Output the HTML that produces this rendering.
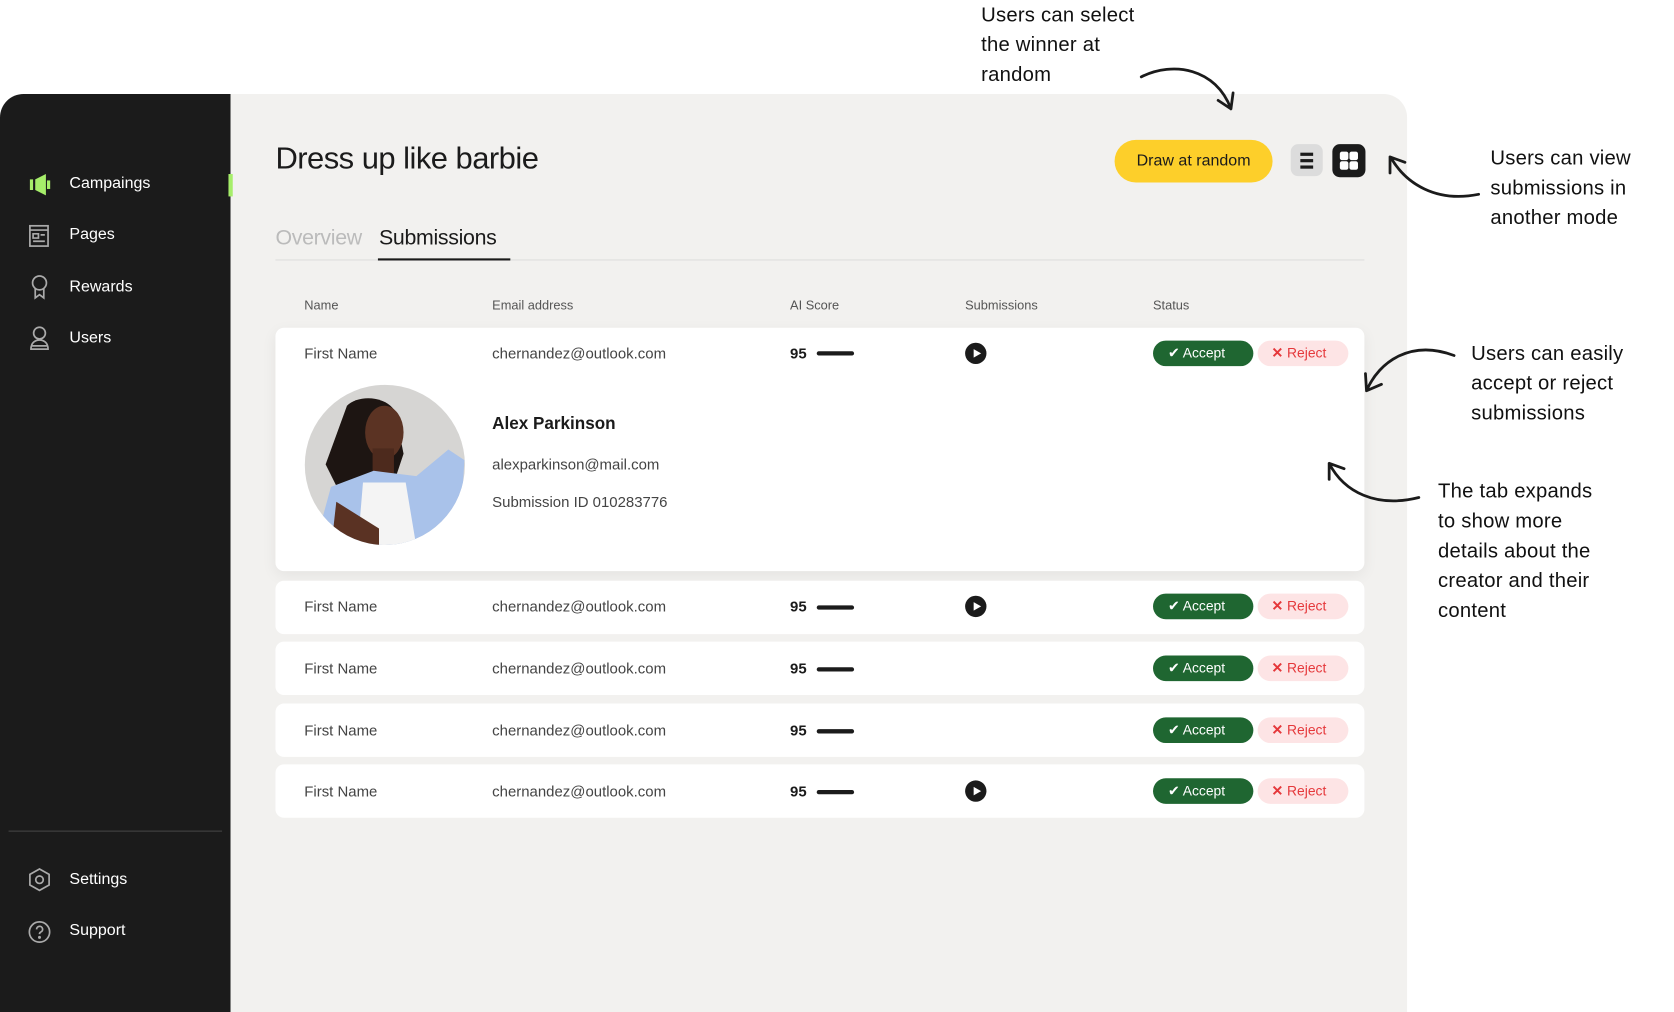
<!DOCTYPE html>
<html><head><meta charset="utf-8">
<style>
html,body{margin:0;padding:0;background:#fff;width:1674px;height:1008px;overflow:hidden;font-family:"Liberation Sans",sans-serif}
#w{position:absolute;left:0;top:0;width:1568px;height:944px;transform:scale(1.0676);transform-origin:0 0}
.a{position:absolute}
.sb{left:0;top:88px;width:216px;height:860px;background:#1b1b1b;border-top-left-radius:22px}
.mn{left:216px;top:88px;width:1102px;height:860px;background:#f2f1ef;border-top-right-radius:22px}
.nav{color:#fff;font-size:15px;left:65px}
.ann{font-size:19px;line-height:28px;color:#111;letter-spacing:.2px}
.hd{font-size:12px;color:#555;top:279px}
.row{left:258px;width:1020px;height:50px;background:#fff;border-radius:8px}
.t{font-size:14px;color:#444;position:absolute}
.acc{position:absolute;left:822px;width:94px;height:24px;border-radius:12px;background:#1f6631;color:#fff;font-size:13px;line-height:24px}
.rej{position:absolute;left:920px;width:85px;height:24px;border-radius:12px;background:#fde4e5;color:#e5383b;font-size:13px;line-height:24px}
.play{position:absolute;left:646px;width:20px;height:20px;border-radius:50%;background:#1b1b1b}
.play:after{content:"";position:absolute;left:8px;top:5.5px;border-left:7px solid #fff;border-top:4.5px solid transparent;border-bottom:4.5px solid transparent}
.bar{position:absolute;left:507px;width:35px;height:4px;border-radius:2px;background:#1b1b1b}
</style></head><body><div id="w">
<div class="a sb"></div>
<div class="a mn"></div>
<div class="a" style="left:214px;top:163px;width:4px;height:21px;background:#a6ee6a"></div>
<svg class="a" style="left:24px;top:160px" width="26" height="26" viewBox="0 0 26 26"><path d="M4 8h3v10H4z M9 8l10-5v20L9 18z" fill="#a6ee6a"/><rect x="20" y="9" width="3" height="8" fill="#a6ee6a"/></svg>
<svg class="a" style="left:26px;top:210px" width="22" height="22" viewBox="0 0 22 22" fill="none" stroke="#aaa" stroke-width="1.6"><rect x="2" y="1.5" width="17" height="19"/><path d="M2 5.5h17M5 9h5v4H5zM12 10h4M5 16h11"/></svg>
<svg class="a" style="left:26px;top:257px" width="22" height="24" viewBox="0 0 22 24" fill="none" stroke="#aaa" stroke-width="1.6"><circle cx="11" cy="8" r="6.5"/><path d="M7 13v9l4-3 4 3v-9"/></svg>
<svg class="a" style="left:26px;top:305px" width="22" height="24" viewBox="0 0 22 24" fill="none" stroke="#aaa" stroke-width="1.6"><circle cx="11" cy="7" r="5.5"/><path d="M3 22c0-6 4-8.5 8-8.5s8 2.5 8 8.5zM3 19h16"/></svg>
<div class="a nav" style="top:163px">Campaings</div>
<div class="a nav" style="top:211px">Pages</div>
<div class="a nav" style="top:260px">Rewards</div>
<div class="a nav" style="top:308px">Users</div>
<div class="a" style="left:8px;top:778px;width:200px;height:1px;background:#444"></div>
<svg class="a" style="left:25px;top:812px" width="24" height="24" viewBox="0 0 24 24" fill="none" stroke="#aaa" stroke-width="1.6"><path d="M12 2l9 5v10l-9 5-9-5V7z"/><circle cx="12" cy="12" r="3.5"/></svg>
<svg class="a" style="left:25px;top:861px" width="24" height="24" viewBox="0 0 24 24" fill="none" stroke="#aaa" stroke-width="1.6"><circle cx="12" cy="12" r="9.5"/><path d="M9.3 9.5a2.8 2.8 0 1 1 3.8 2.6c-.8.4-1.1 1-1.1 1.9"/><circle cx="12" cy="17" r=".6" fill="#aaa"/></svg>
<div class="a nav" style="top:815px">Settings</div>
<div class="a nav" style="top:863px">Support</div>

<div class="a" style="left:258px;top:133px;font-size:29px;color:#1b1b1b;letter-spacing:-.5px">Dress up like barbie</div>
<div class="a" style="left:258px;top:212px;font-size:20px;color:#bbb;letter-spacing:-.3px">Overview</div>
<div class="a" style="left:355px;top:212px;font-size:20px;color:#1b1b1b;letter-spacing:-.3px">Submissions</div>
<div class="a" style="left:258px;top:243px;width:1020px;height:1px;background:#ddd"></div>
<div class="a" style="left:354px;top:242px;width:124px;height:2px;background:#1b1b1b"></div>

<div class="a" style="left:1044px;top:131px;width:148px;height:40px;border-radius:20px;background:#fdcf2a;font-size:15px;color:#1b1b1b;text-align:center;line-height:40px">Draw at random</div>
<div class="a" style="left:1209px;top:135px;width:30px;height:30px;border-radius:7px;background:#dcdcdc"><div class="a" style="left:9px;top:8px;width:12px;height:2.5px;background:#1b1b1b"></div><div class="a" style="left:9px;top:14px;width:12px;height:2.5px;background:#1b1b1b"></div><div class="a" style="left:9px;top:20px;width:12px;height:2.5px;background:#1b1b1b"></div></div>
<div class="a" style="left:1248px;top:135px;width:31px;height:31px;border-radius:7px;background:#1b1b1b"><div class="a" style="left:7px;top:7px;width:7.5px;height:7.5px;border-radius:2px;background:#fff"></div><div class="a" style="left:16px;top:7px;width:7.5px;height:7.5px;border-radius:2px;background:#fff"></div><div class="a" style="left:7px;top:16px;width:7.5px;height:7.5px;border-radius:2px;background:#fff"></div><div class="a" style="left:16px;top:16px;width:7.5px;height:7.5px;border-radius:2px;background:#fff"></div></div>

<div class="a hd" style="left:285px">Name</div>
<div class="a hd" style="left:461px">Email address</div>
<div class="a hd" style="left:740px">AI Score</div>
<div class="a hd" style="left:904px">Submissions</div>
<div class="a hd" style="left:1080px">Status</div>

<div class="a row" style="top:307px;height:228px;box-shadow:0 4px 14px rgba(0,0,0,.06)">
<div class="t" style="left:27px;top:16px">First Name</div>
<div class="t" style="left:203px;top:16px">chernandez@outlook.com</div>
<div class="t" style="left:482px;top:16px;font-weight:bold;color:#1b1b1b">95</div>
<div class="bar" style="top:22px"></div>
<div class="play" style="top:14px"></div>
<div class="acc" style="top:12px"><span style="margin-left:14px">✔</span> Accept</div>
<div class="rej" style="top:12px"><b style="margin-left:13px">✕</b> Reject</div>
<svg class="a" style="left:27px;top:53px" width="151" height="151" viewBox="0 0 151 151">
<defs><clipPath id="c"><circle cx="75.5" cy="75.5" r="75"/></clipPath></defs>
<g clip-path="url(#c)"><rect width="151" height="151" fill="#d6d5d3"/>
<path d="M40 20c10-10 35-10 45 5l8 40-10 30H30l-10-20z" fill="#1d1512"/>
<ellipse cx="75" cy="45" rx="18" ry="25" fill="#5b3323"/>
<rect x="64" y="60" width="20" height="30" fill="#4d2a1d"/>
<path d="M10 151l15-55 40-15 40 5 30-25 15 10-5 80z" fill="#a9c2ea"/>
<path d="M55 92h40l10 60H50z" fill="#f4f4f4"/>
<path d="M30 110l40 25 0 20H25z" fill="#5a3223"/></g></svg>
<div class="a" style="left:203px;top:82px;font-size:16px;font-weight:bold;color:#1b1b1b">Alex Parkinson</div>
<div class="t" style="left:203px;top:120px">alexparkinson@mail.com</div>
<div class="t" style="left:203px;top:155px">Submission ID 010283776</div>
</div>

<div class="a row" style="top:544px"><div class="t" style="left:27px;top:16px">First Name</div><div class="t" style="left:203px;top:16px">chernandez@outlook.com</div><div class="t" style="left:482px;top:16px;font-weight:bold;color:#1b1b1b">95</div><div class="bar" style="top:23px"></div><div class="play" style="top:14px"></div><div class="acc" style="top:12px"><span style="margin-left:14px">✔</span> Accept</div><div class="rej" style="top:12px"><b style="margin-left:13px">✕</b> Reject</div></div>
<div class="a row" style="top:601px"><div class="t" style="left:27px;top:17px">First Name</div><div class="t" style="left:203px;top:17px">chernandez@outlook.com</div><div class="t" style="left:482px;top:17px;font-weight:bold;color:#1b1b1b">95</div><div class="bar" style="top:24px"></div><div class="acc" style="top:13px"><span style="margin-left:14px">✔</span> Accept</div><div class="rej" style="top:13px"><b style="margin-left:13px">✕</b> Reject</div></div>
<div class="a row" style="top:659px"><div class="t" style="left:27px;top:17px">First Name</div><div class="t" style="left:203px;top:17px">chernandez@outlook.com</div><div class="t" style="left:482px;top:17px;font-weight:bold;color:#1b1b1b">95</div><div class="bar" style="top:24px"></div><div class="acc" style="top:13px"><span style="margin-left:14px">✔</span> Accept</div><div class="rej" style="top:13px"><b style="margin-left:13px">✕</b> Reject</div></div>
<div class="a row" style="top:716px"><div class="t" style="left:27px;top:17px">First Name</div><div class="t" style="left:203px;top:17px">chernandez@outlook.com</div><div class="t" style="left:482px;top:17px;font-weight:bold;color:#1b1b1b">95</div><div class="bar" style="top:24px"></div><div class="play" style="top:15px"></div><div class="acc" style="top:13px"><span style="margin-left:14px">✔</span> Accept</div><div class="rej" style="top:13px"><b style="margin-left:13px">✕</b> Reject</div></div>

<div class="a ann" style="left:919px;top:1px">Users can select<br>the winner at<br>random</div>
<div class="a ann" style="left:1396px;top:135px">Users can view<br>submissions in<br>another mode</div>
<div class="a ann" style="left:1378px;top:318px">Users can easily<br>accept or reject<br>submissions</div>
<div class="a ann" style="left:1347px;top:447px">The tab expands<br>to show more<br>details about the<br>creator and their<br>content</div>

<svg class="a" style="left:0;top:0" width="1568" height="944" fill="none" stroke="#1b1b1b" stroke-width="2.6" stroke-linecap="round" stroke-linejoin="round">
<path d="M1069 72c30-15 70-8 84 30M1141 94l12 8 2-15"/>
<path d="M1385 182c-40 8-68-10-82-34M1302 162l0-15 14 5"/>
<path d="M1362 333c-40-15-70 5-82 33M1279 350l1 16 14-6"/>
<path d="M1329 466c-40 10-70-5-84-32M1245 449l0-15 14 5"/>
</svg>
</div></body></html>
